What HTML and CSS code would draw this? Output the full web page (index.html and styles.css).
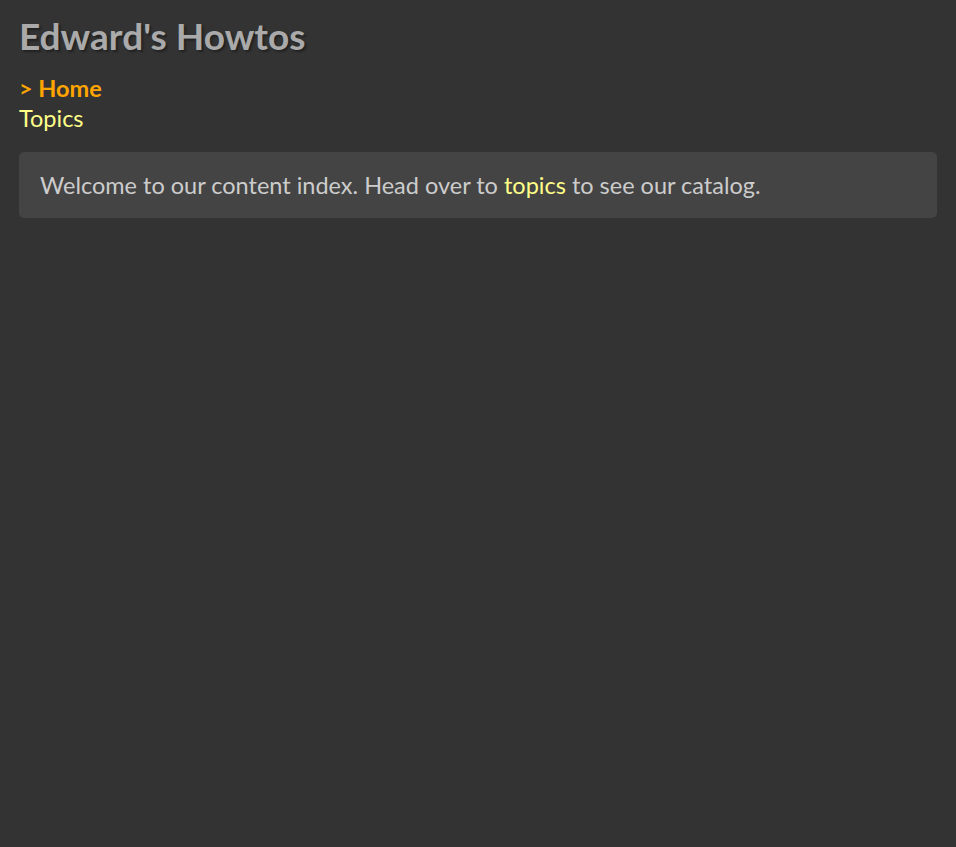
FILE: index.html
```html
<!DOCTYPE html>
<html lang="en">
<head>
<meta charset="utf-8">
<title>Edward's Howtos</title>
<link rel="stylesheet" href="styles.css">
</head>
<body>
<div class="page">
  <h1 class="title">Edward's Howtos</h1>
  <nav class="nav">
    <a class="nav-link nav-current" href="#">&gt; Home</a>
    <a class="nav-link" href="#">Topics</a>
  </nav>
  <div class="panel">
    Welcome to our content index. Head over to <a class="inline-link" href="#">topics</a> to see our catalog.
  </div>
</div>
</body>
</html>
```
FILE: styles.css
```css
html, body {
  margin: 0;
  padding: 0;
  background: #333333;
}
body {
  font-family: Lato, "Open Sans", sans-serif;
  color: #cccccc;
}
.page {
  padding: 14px 19px 19px 19px;
}
.title {
  margin: 0;
  font-size: 37px;
  font-weight: bold;
  color: #aaaaaa;
  text-shadow: 2px 2px 2px #222;
  line-height: 44px;
}
.nav {
  display: flex;
  flex-direction: column;
  margin-top: 15px;
}
.nav-link {
  font-size: 23.5px;
  line-height: 30px;
  color: #ffff88;
  text-decoration: none;
}
.nav-current {
  color: #ffa500;
  font-weight: bold;
}
.panel {
  margin-top: 19px;
  background: #444444;
  border-radius: 5px;
  padding: 19px 21px 18px 21px;
  font-size: 23.5px;
  line-height: 29px;
  color: #cccccc;
}
.inline-link {
  color: #ffff88;
  text-decoration: none;
}
```
